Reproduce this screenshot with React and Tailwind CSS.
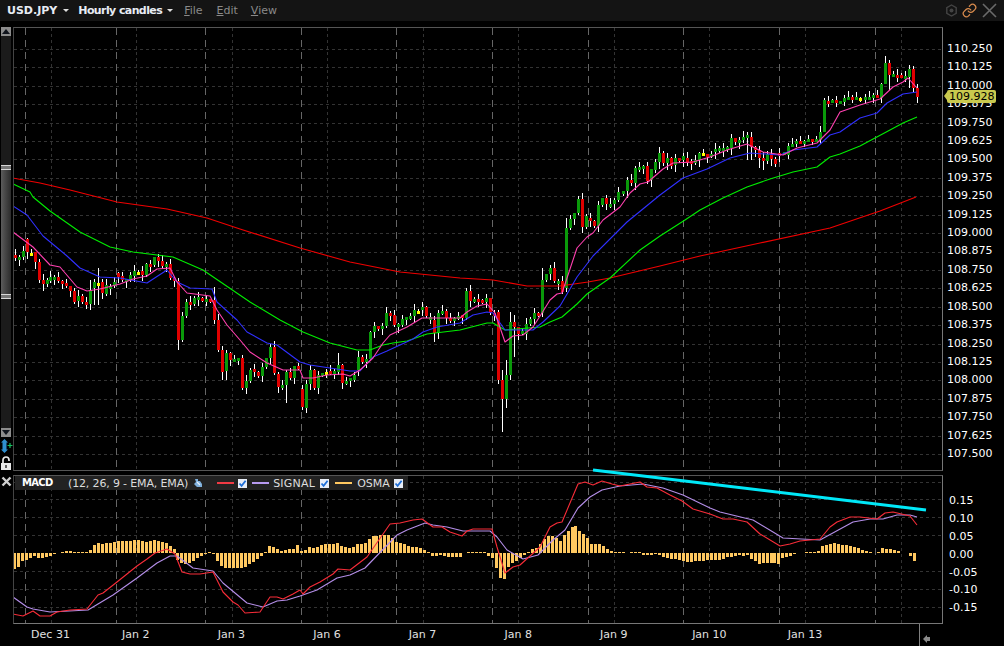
import React from 'react';
import { Link } from 'lucide-react';

// [x, open, close] in page pixels, y grows downward so open > close is an up candle
const candles = [
  [15,255,258],[19,259,257],[23,257,251],[27,239,252],[31,253,253],[35,252,262],[39,262,280],[43,280,284],[47,284,280],[50,281,277],
  [54,279,277],[58,277,281],[62,281,283],[66,283,286],[70,286,291],[74,291,302],[78,301,296],[82,296,302],[86,302,303],[90,304,290],
  [94,288,282],[98,283,283],[102,282,293],[106,294,285],[110,289,286],[114,286,282],[118,273,277],[122,276,280],[126,282,279],[130,280,275],
  [134,276,271],[138,272,272],[142,271,275],[146,275,264],[150,264,266],[154,265,257],[158,257,261],[162,261,266],[166,266,264],[170,264,278],
  [174,278,281],[178,281,340],[182,340,316],[186,316,302],[190,302,304],[194,304,298],[198,300,297],[202,298,300],[206,300,299],[210,299,301],
  [214,300,320],[218,320,350],[222,350,372],[226,371,353],[230,353,360],[234,360,359],[238,359,358],[242,358,388],[246,388,381],[250,381,370],
  [254,369,371],[258,372,376],[262,376,367],[266,367,358],[270,358,347],[274,347,373],[278,374,387],[282,388,385],[286,385,372],[290,372,378],
  [294,378,366],[298,366,368],[302,389,407],[306,408,384],[310,384,370],[314,370,388],[318,388,375],[322,375,373],[326,372,372],[330,371,373],
  [334,373,371],[338,372,365],[342,365,383],[346,383,381],[350,381,378],[354,380,375],[358,370,357],[362,357,362],[366,362,359],[370,359,332],
  [374,332,326],[378,326,329],[382,329,326],[386,326,313],[390,313,315],[394,315,325],[398,327,324],[402,325,319],[406,319,317],[410,318,316],
  [414,316,310],[418,311,311],[422,310,307],[426,307,316],[430,318,317],[434,320,333],[438,333,313],[442,313,311],[446,311,318],[450,318,321],
  [454,320,318],[458,318,316],[462,315,318],[466,318,291],[470,291,301],[474,301,299],[478,299,301],[482,300,302],[486,302,298],[490,298,313],
  [494,313,315],[498,312,380],[502,380,399],[506,399,375],[510,375,322],[514,322,327],[518,327,334],[522,333,331],[526,334,324],[530,324,319],
  [534,319,313],[538,313,315],[542,313,280],[546,280,274],[550,274,268],[554,268,281],[558,284,281],[562,281,292],[566,288,228],[570,228,219],
  [574,219,213],[578,213,199],[582,199,227],[586,227,216],[590,218,221],[594,221,226],[598,226,205],[602,205,198],[606,198,204],[610,206,204],
  [614,204,200],[618,200,192],[623,193,191],[627,191,180],[631,180,183],[635,183,168],[639,169,167],[643,167,166],[647,166,181],[651,180,169],
  [655,170,162],[659,162,153],[663,153,163],[667,163,158],[671,158,166],[675,165,158],[679,158,160],[683,160,156],[687,158,163],[691,161,163],
  [695,162,160],[699,160,153],[703,153,153],[707,154,156],[711,155,154],[715,152,149],[719,150,148],[723,150,148],[727,149,147],[731,148,138],
  [735,138,142],[739,142,140],[743,140,137],[747,137,135],[751,137,147],[755,147,150],[759,150,158],[763,158,161],[767,161,154],[771,155,159],
  [775,159,164],[779,153,155],[784,155,152],[788,155,146],[792,146,144],[796,143,141],[800,141,143],[804,143,141],[808,141,139],[812,139,141],
  [816,141,139],[820,140,132],[824,132,100],[828,101,103],[832,103,100],[836,100,103],[840,103,101],[844,102,98],[848,99,97],[852,97,99],
  [856,98,97],[860,98,98],[865,99,97],[869,98,97],[873,98,95],[877,95,97],[881,98,84],[885,84,63],[889,63,75],[893,76,74],
  [897,75,77],[901,75,77],[905,77,76],[909,77,69],[913,69,88],[917,88,97],
];

// long wicks read off the chart, x -> [high, low]
const wicks = {
  90: [280, 310], 94: [279, 305], 98: [268, 305], 178: [278, 350], 182: [312, 342], 214: [287, 324], 222: [346, 380], 226: [350, 380],
  286: [370, 403], 302: [385, 410], 306: [380, 413], 338: [353, 375], 434: [316, 342], 498: [310, 384], 502: [370, 432], 506: [360, 408],
  510: [312, 380], 514: [315, 357], 542: [268, 317], 566: [218, 292], 747: [132, 160], 751: [132, 160], 759: [146, 168], 763: [152, 170],
  885: [56, 84], 889: [60, 90], 909: [65, 88], 913: [66, 92], 917: [84, 103],
};

const redLine = [13,178,40,183,70,190,117,202,167,209,207,218,240,229,300,248,350,262,400,272,460,278,493,280,527,286,560,286,588,282,610,278,660,266,700,256,760,243,830,228,880,211,916,197];
const greenLine = [13,184,30,192,33,197,50,211,80,232,110,247,133,252,173,257,203,270,250,302,280,320,303,332,330,343,357,350,370,350,383,345,393,343,407,341,427,334,460,330,487,323,493,323,505,330,540,327,550,322,562,317,577,304,587,294,610,278,640,250,660,236,685,220,700,210,723,198,747,187,770,179,793,172,817,167,830,157,840,154,860,146,890,130,903,123,917,117];
const blueLine = [13,206,27,215,43,236,67,256,80,268,100,277,120,278,147,283,167,270,177,282,190,288,212,289,217,302,237,320,247,332,267,343,277,345,300,362,310,365,350,371,360,371,373,357,387,351,413,339,423,332,437,327,460,323,473,315,487,312,493,313,505,330,533,330,543,322,560,306,577,277,593,256,627,222,660,195,683,178,707,169,730,158,750,153,780,155,793,150,817,147,830,135,840,132,860,118,877,113,887,103,903,94,917,92];
const pinkLine = [13,232,25,241,33,247,50,265,60,267,77,287,87,291,100,289,120,284,133,279,147,276,157,269,170,268,177,282,187,293,210,296,217,310,227,325,240,340,250,352,267,363,283,370,300,370,303,378,313,378,327,375,343,374,350,376,360,370,373,358,383,343,390,335,407,327,422,318,432,318,447,318,460,318,467,312,477,306,487,304,495,313,505,342,513,336,523,335,533,327,542,313,550,300,557,294,562,293,577,248,587,237,593,233,603,220,620,207,630,193,640,184,648,182,663,169,673,163,693,162,710,157,727,150,747,144,763,152,783,155,797,148,817,143,830,130,840,112,860,105,880,99,893,87,903,82,908,78,917,88];

const macdLine = [13,614,23,616,33,611,40,616,50,616,57,612,70,610,87,609,98,595,103,593,117,582,137,566,147,559,155,553,167,549,175,554,182,572,190,574,200,574,213,572,223,592,233,602,238,605,245,613,260,612,270,597,277,597,283,599,293,594,300,590,303,594,310,587,320,582,333,574,338,569,350,570,367,557,390,524,400,523,413,520,422,519,433,527,442,527,450,532,462,536,467,531,473,529,492,529,497,547,505,573,513,567,520,565,540,547,550,527,557,523,562,522,578,484,585,482,593,485,602,481,612,484,620,486,640,482,647,487,657,488,670,495,682,501,693,509,710,514,723,519,733,519,747,522,760,534,780,546,790,544,800,541,820,539,830,527,837,522,850,517,860,517,877,519,885,513,893,512,910,516,917,525];
const signalLine = [13,597,27,607,33,609,50,612,88,610,113,595,137,578,157,563,170,556,177,556,193,568,213,571,223,583,247,603,263,607,277,601,287,600,300,596,317,590,337,578,350,575,365,568,397,535,407,530,425,523,433,525,447,527,463,531,490,531,497,537,507,550,523,559,538,555,553,540,565,530,578,508,590,497,602,490,620,486,643,484,663,488,683,495,710,508,720,512,753,520,778,535,783,538,820,540,853,522,870,519,883,519,897,515,910,515,917,517];

// OSMA histogram, px above (+) or below (-) the zero line, 4px apart
const osma = [
  -16,-14,-8,-7,-5,-3,-5,-5,-4,-3,-1,0,1,2,2,1,1,1,1,3,8,10,9,10,10,11,12,12,12,12,13,13,12,11,12,13,12,11,10,7,4,-7,-10,-11,-10,-8,-5,-3,-1,1,-1,-8,-13,-15,-15,-15,-15,-15,-14,-11,-9,-6,-3,1,7,6,4,2,3,4,4,8,
  2,3,6,5,6,8,9,9,9,10,7,6,5,6,9,9,10,14,17,17,18,18,18,15,11,10,9,7,6,6,5,3,1,-3,-3,-2,-3,-4,-4,-4,-4,0,1,1,1,1,1,-3,-5,-15,-25,-26,-14,-10,-8,-5,-2,1,4,5,9,14,17,17,15,12,18,22,26,27,22,19,15,9,9,9,7,4,2,1,
  1,1,0,1,1,1,-2,-2,-2,-1,-2,-4,-5,-6,-6,-7,-8,-9,-9,-8,-8,-8,-7,-7,-7,-7,-6,-4,-4,-3,-2,-3,-2,-6,-8,-11,-10,-10,-10,-10,-11,-5,-4,-3,-1,0,0,1,1,1,2,7,8,9,10,9,8,8,7,6,5,3,2,1,0,1,5,4,4,3,2,0,0,-3,-8,
];

const priceLabels = ['110.250','110.125','110.000','109.875','109.750','109.625','109.500','109.375','109.250','109.125','109.000','108.875','108.750','108.625','108.500','108.375','108.250','108.125','108.000','107.875','107.750','107.625','107.500'];
const macdLabels = ['0.15','0.10','0.05','0.00','-0.05','-0.10','-0.15'];
const dates = ['Jan 2','Jan 3','Jan 6','Jan 7','Jan 8','Jan 9','Jan 10','Jan 13'];
const majorX = [25,116,205,301,396,492,588,683,779,875];
const minorX = [51,136,232,327,423,518,614,709,805,901];

function pts(a) {
  const out = [];
  for (let i = 0; i < a.length; i += 2) out.push(a[i] + ',' + a[i + 1]);
  return out.join(' ');
}

function Grid({ ys, top, bottom, left, right }) {
  return (
    <g shapeRendering="crispEdges">
      {ys.map((y) => (
        <line key={y} x1={left} x2={right} y1={y + 0.5} y2={y + 0.5} stroke="#333333" strokeDasharray="3 3" />
      ))}
      {minorX.map((x) => (
        <line key={x} x1={x + 0.5} x2={x + 0.5} y1={top} y2={bottom} stroke="#333333" strokeDasharray="3 3" />
      ))}
      {majorX.map((x) => (
        <line key={x} x1={x + 0.5} x2={x + 0.5} y1={top} y2={bottom} stroke="#666666" strokeDasharray="7 5" />
      ))}
    </g>
  );
}

function Candle({ x, o, c }) {
  const top = Math.min(o, c);
  const bottom = Math.max(o, c);
  const w = wicks[x] || [top - (x * 13) % 7, bottom + (x * 29) % 8];
  const fill = o === c ? '#ffff00' : o > c ? '#0a9a0a' : '#e00000';
  return (
    <g>
      <rect x={x} y={w[0]} width="1" height={w[1] - w[0]} fill="#ffffff" />
      <rect x={x - 1} y={top} width="3" height={Math.max(3, bottom - top)} fill={fill} />
    </g>
  );
}

function PriceChart() {
  const ys = priceLabels.map((_, i) => Math.round(49 + i * 18.41));
  return (
    <svg viewBox="14 28 928 442" width="928" height="442" className="block">
      <Grid ys={ys} top={28} bottom={470} left={14} right={942} />
      <g shapeRendering="crispEdges">
        {candles.map((k) => (
          <Candle key={k[0]} x={k[0]} o={k[1]} c={k[2]} />
        ))}
      </g>
      <g fill="none" strokeWidth="1.1" strokeLinejoin="round">
        <polyline points={pts(redLine)} stroke="#f00000" />
        <polyline points={pts(greenLine)} stroke="#00ee00" />
        <polyline points={pts(blueLine)} stroke="#3030ff" />
        <polyline points={pts(pinkLine)} stroke="#ff40b0" />
      </g>
    </svg>
  );
}

function MacdChart() {
  return (
    <svg viewBox="14 476 928 147" width="928" height="147" className="block">
      <Grid ys={[482, 499, 517, 535, 571, 589, 607]} top={476} bottom={623} left={14} right={942} />
      <g shapeRendering="crispEdges" fill="#ffc860">
        {osma.map((h, i) => (
          <rect key={i} x={Math.round(13.3 + i * 3.98)} y={h > 0 ? 553 - h : 553} width="3" height={Math.abs(h)} />
        ))}
      </g>
      <g fill="none" strokeWidth="1.1" strokeLinejoin="round">
        <polyline points={pts(signalLine)} stroke="#b48ee8" />
        <polyline points={pts(macdLine)} stroke="#f82c38" />
      </g>
    </svg>
  );
}

function Check() {
  return (
    <svg width="9" height="9" viewBox="0 0 9 9" className="shrink-0">
      <rect width="9" height="9" fill="#e8eef8" />
      <path d="M1.5 4.5 L3.6 6.8 L7.6 1.8" fill="none" stroke="#1f6fd8" strokeWidth="1.8" />
    </svg>
  );
}

function Swatch({ color }) {
  return <span className={`block w-[17px] h-[2px] shrink-0 ${color}`} />;
}

function Legend() {
  return (
    <div className="absolute left-[1px] top-0 h-[14px] w-[393px] bg-[#222222] flex items-center text-[11px] leading-none text-[#dddddd]">
      <span className="ml-[7px] w-[46px] text-[10px] font-bold tracking-[-0.7px] text-white">MACD</span>
      <span className="whitespace-nowrap tracking-[-0.15px]">(12, 26, 9 - EMA, EMA)</span>
      <svg width="10" height="10" viewBox="0 0 10 10" className="ml-[5px] shrink-0">
        <path d="M2 1 L5 1 L5 3 L7 3 L9 6 L9 9 L4 9 L1 6 L3 4 Z" fill="#7fb0dc" />
        <path d="M4 4 L7 7" stroke="#e8f0fa" strokeWidth="1.2" />
      </svg>
      <span className="ml-[14px]"><Swatch color="bg-[#f03a44]" /></span>
      <span className="ml-[4px]"><Check /></span>
      <span className="ml-[5px]"><Swatch color="bg-[#b79af0]" /></span>
      <span className="ml-[4px] w-[47px] tracking-[0.2px]">SIGNAL</span>
      <Check />
      <span className="ml-[6px]"><Swatch color="bg-[#ffc860]" /></span>
      <span className="ml-[5px] w-[37px]">OSMA</span>
      <Check />
    </div>
  );
}

function ScrollRail() {
  return (
    <div className="w-[13px] shrink-0 flex flex-col pl-[1px]">
      <div className="w-[10px] h-[9px] bg-[#8c8c8c] flex items-center justify-center">
        <span className="w-0 h-0 border-x-[4px] border-x-transparent border-b-[5px] border-b-[#10141c]" />
      </div>
      <div className="w-[10px] h-[392px] bg-[#1b1b1b] pt-[129px]">
        <div className="h-[134px] bg-gradient-to-r from-[#5c5c5c] to-[#2c2c2c] flex flex-col justify-between">
          <div className="h-[5px] border-y border-[#d8d8d8] bg-[#777777]" />
          <div className="h-[5px] border-y border-[#d8d8d8] bg-[#777777]" />
        </div>
      </div>
      <div className="w-[10px] h-[9px] bg-[#8c8c8c] flex items-center justify-center">
        <span className="w-0 h-0 border-x-[4px] border-x-transparent border-t-[5px] border-t-[#10141c]" />
      </div>
      <svg width="12" height="14" viewBox="0 0 12 14" className="mt-[2px] shrink-0">
        <path d="M3.5 0 L7 3.5 L5.5 3.5 L5.5 10.5 L7 10.5 L3.5 14 L0 10.5 L1.5 10.5 L1.5 3.5 L0 3.5 Z" fill="#2f8fd0" />
        <path d="M6.5 6.5 H11.5 M9 4 V9" stroke="#18c060" strokeWidth="1.2" />
      </svg>
      <svg width="10" height="14" viewBox="0 0 10 14" className="mt-[3px] shrink-0">
        <path d="M2 7 V4 A3 3 0 0 1 8 4 V5" fill="none" stroke="#e8e8e8" strokeWidth="1.7" />
        <path d="M0 7 H10 V14 H0 Z M4.4 9 V12 H5.6 V9 Z" fill="#e8e8e8" fillRule="evenodd" />
      </svg>
    </div>
  );
}

export default function App() {
  return (
    <div className="relative w-[1004px] h-[646px] overflow-hidden bg-black text-white [font-family:'DejaVu_Sans',sans-serif]">
      <header className="h-[21px] mb-[6px] bg-[#141414] flex items-center pl-[7px] text-[11px] leading-none">
        <span className="font-bold text-[#e8ecf4]">USD.JPY</span>
        <span className="ml-[6px] w-0 h-0 border-x-[3px] border-x-transparent border-t-[3px] border-t-[#e0e0e0]" />
        <span className="ml-[9px] font-bold tracking-[-0.6px] text-[#e8ecf4]">Hourly candles</span>
        <span className="ml-[5px] w-0 h-0 border-x-[3px] border-x-transparent border-t-[3px] border-t-[#e0e0e0]" />
        <span className="ml-[11px] text-[#8a8a8a]"><u>F</u>ile</span>
        <span className="ml-[14px] text-[#8a8a8a]"><u>E</u>dit</span>
        <span className="ml-[13px] text-[#8a8a8a]"><u>V</u>iew</span>
        <div className="ml-auto flex items-center pr-[7px]">
          <svg width="13" height="13" viewBox="0 0 13 13" className="mr-[4px]">
            <path d="M6.5 1 L11.2 3.7 V9.3 L6.5 12 L1.8 9.3 V3.7 Z" fill="none" stroke="#444444" strokeWidth="1.4" />
            <circle cx="6.5" cy="6.5" r="2" fill="#444444" />
          </svg>
          <Link size={15} strokeWidth={2} className="text-[#d98c4e] mr-[5px]" />
          <svg width="15" height="15" viewBox="0 0 15 15">
            <path d="M1 1 L14 14 M14 1 L1 14" stroke="#6a6a6a" strokeWidth="1.6" />
          </svg>
        </div>
      </header>

      <section className="flex h-[444px]">
        <ScrollRail />
        <div className="w-[928px] h-[442px] box-content shrink-0 border border-t-[#555555] border-b-[#555555] border-r-[#777777] border-l-[#444444]">
          <PriceChart />
        </div>
        <div className="pl-[4px] pt-[13px] text-[11px] text-white">
          {priceLabels.map((p) => (
            <div key={p} className="h-[18.41px] leading-[18px]">{p}</div>
          ))}
        </div>
      </section>

      <section className="flex h-[149px] mt-[4px]">
        <div className="w-[13px] shrink-0 pl-[1px] pt-[1px]">
          <svg width="11" height="11" viewBox="0 0 11 11">
            <path d="M1.5 1.5 L9.5 9.5 M9.5 1.5 L1.5 9.5" stroke="#cfcfcf" strokeWidth="2.4" />
          </svg>
        </div>
        <div className="relative w-[928px] h-[147px] box-content shrink-0 border border-t-[#555555] border-b-[#777777] border-r-[#777777] border-l-[#444444]">
          <MacdChart />
          <Legend />
        </div>
        <div className="pl-[6px] pt-[17px] text-[11px] text-white">
          {macdLabels.map((p) => (
            <div key={p} className="h-[17.9px] leading-[18px]">{p}</div>
          ))}
        </div>
      </section>

      <footer className="flex h-[22px] pl-[13px] text-[11px] text-[#e0e0e0]">
        <div className="w-[75px] pt-[4px] text-center leading-[14px]">Dec 31</div>
        {dates.map((d) => (
          <div key={d} className="w-[95.6px] pt-[4px] text-center leading-[14px]">{d}</div>
        ))}
        <div className="ml-[66px] w-[1px] h-[22px] bg-[#808080]" />
        <div className="ml-[3px] mt-[7px] flex items-center">
          <span className="w-0 h-0 border-y-[4px] border-y-transparent border-r-[4px] border-r-[#8a8a8a]" />
          <span className="w-[3px] h-[4px] bg-[#8a8a8a]" />
        </div>
      </footer>

      <svg width="1004" height="646" className="absolute inset-0 pointer-events-none">
        <line x1="593" y1="470" x2="926" y2="510" stroke="#00e8f8" strokeWidth="3" />
      </svg>

      <div className="absolute left-[947px] top-[90px] h-[13px] w-[49px] bg-[#c9c94e] rounded-[2px] text-[11px] leading-[13px] text-black pl-[2px]">
        <span className="absolute -left-[3px] top-[2px] w-0 h-0 border-y-[4px] border-y-transparent border-r-[3px] border-r-[#c9c94e]" />
        109.928
      </div>
    </div>
  );
}
